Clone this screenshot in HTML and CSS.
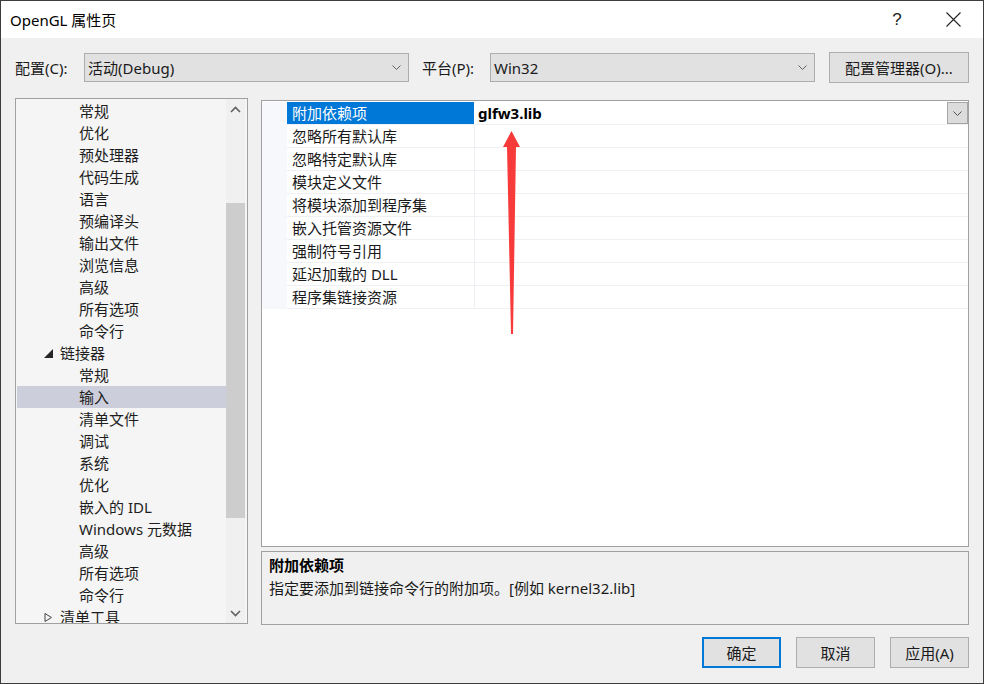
FILE: index.html
```html
<!DOCTYPE html>
<html lang="zh-CN">
<head>
<meta charset="utf-8">
<title>OpenGL 属性页</title>
<link rel="stylesheet" href="styles.css">
</head>
<body>
<div class="window">
  <div class="titlebar">
    <span class="title">OpenGL 属性页</span>
    <span class="help">?</span>
    <svg class="close" width="15" height="15" viewBox="0 0 15 15"><path d="M0.5 0.5 L14.5 14.5 M14.5 0.5 L0.5 14.5" stroke="#222" stroke-width="1.1" fill="none"/></svg>
  </div>
  <div class="body">
    <div class="config-row">
      <span class="label label1">配置(C):</span>
      <div class="select sel1"><span class="sel-text">活动(Debug)</span><svg class="chev" width="9" height="5" viewBox="0 0 9 5"><path d="M0.5 0.5 L4.5 4.5 L8.5 0.5" stroke="#606060" fill="none"/></svg></div>
      <span class="label label2">平台(P):</span>
      <div class="select sel2"><span class="sel-text">Win32</span><svg class="chev" width="9" height="5" viewBox="0 0 9 5"><path d="M0.5 0.5 L4.5 4.5 L8.5 0.5" stroke="#606060" fill="none"/></svg></div>
      <button class="btn mgr">配置管理器(O)...</button>
    </div>
    <div class="main">
      <div class="tree">
        <div class="tree-list">
          <div class="item child">常规</div>
          <div class="item child">优化</div>
          <div class="item child">预处理器</div>
          <div class="item child">代码生成</div>
          <div class="item child">语言</div>
          <div class="item child">预编译头</div>
          <div class="item child">输出文件</div>
          <div class="item child">浏览信息</div>
          <div class="item child">高级</div>
          <div class="item child">所有选项</div>
          <div class="item child">命令行</div>
          <div class="item parent"><svg class="exp" width="9" height="9" viewBox="0 0 9 9"><polygon points="9,0 9,9 0,9" fill="#262626"/></svg>链接器</div>
          <div class="item child">常规</div>
          <div class="item child selected">输入</div>
          <div class="item child">清单文件</div>
          <div class="item child">调试</div>
          <div class="item child">系统</div>
          <div class="item child">优化</div>
          <div class="item child">嵌入的 IDL</div>
          <div class="item child">Windows 元数据</div>
          <div class="item child">高级</div>
          <div class="item child">所有选项</div>
          <div class="item child">命令行</div>
          <div class="item parent"><svg class="exp" width="9" height="9" viewBox="0 0 9 9"><polygon points="1,0.5 7.5,4.5 1,8.5" fill="none" stroke="#444"/></svg>清单工具</div>
        </div>
        <div class="scrollbar">
          <div class="sb-btn"><svg width="11" height="7" viewBox="0 0 11 7"><path d="M1 6 L5.5 1.5 L10 6" stroke="#606060" stroke-width="1.6" fill="none"/></svg></div>
          <div class="sb-track"><div class="sb-thumb"></div></div>
          <div class="sb-btn"><svg width="11" height="7" viewBox="0 0 11 7"><path d="M1 1 L5.5 5.5 L10 1" stroke="#606060" stroke-width="1.6" fill="none"/></svg></div>
        </div>
      </div>
      <div class="right">
        <div class="grid">
          <div class="row">
            <div class="gutter"></div>
            <div class="name active">附加依赖项</div>
            <div class="value"><span class="val-text">glfw3.lib</span><span class="drop"><svg width="9" height="5" viewBox="0 0 9 5"><path d="M0.5 0.5 L4.5 4.5 L8.5 0.5" stroke="#505050" fill="none"/></svg></span></div>
          </div>
          <div class="row"><div class="gutter"></div><div class="name">忽略所有默认库</div><div class="value"></div></div>
          <div class="row"><div class="gutter"></div><div class="name">忽略特定默认库</div><div class="value"></div></div>
          <div class="row"><div class="gutter"></div><div class="name">模块定义文件</div><div class="value"></div></div>
          <div class="row"><div class="gutter"></div><div class="name">将模块添加到程序集</div><div class="value"></div></div>
          <div class="row"><div class="gutter"></div><div class="name">嵌入托管资源文件</div><div class="value"></div></div>
          <div class="row"><div class="gutter"></div><div class="name">强制符号引用</div><div class="value"></div></div>
          <div class="row"><div class="gutter"></div><div class="name">延迟加载的 DLL</div><div class="value"></div></div>
          <div class="row"><div class="gutter"></div><div class="name">程序集链接资源</div><div class="value"></div></div>
        </div>
        <div class="desc">
          <div class="desc-title">附加依赖项</div>
          <div class="desc-text">指定要添加到链接命令行的附加项。[例如 kernel32.lib]</div>
        </div>
      </div>
    </div>
    <div class="buttons">
      <button class="btn action default">确定</button>
      <button class="btn action">取消</button>
      <button class="btn action">应用(A)</button>
    </div>
  </div>
</div>
<svg class="annot" width="984" height="684" viewBox="0 0 984 684">
  <polygon points="511.5,131 520,147 516,147 513,334 511,334 507,147 503,147" fill="#f73b3b"/>
</svg>
</body>
</html>
```

FILE: styles.css
```css
* { box-sizing: border-box; }
html, body { margin: 0; padding: 0; }
body {
  width: 984px;
  height: 684px;
  position: relative;
  overflow: hidden;
  font-family: "Noto Sans", "Noto Sans CJK SC", sans-serif;
  font-size: 15px;
  color: #1a1a1a;
  background: #f0f0f0;
}
.window {
  width: 984px;
  height: 684px;
  border: 1px solid #3c3c3c;
  display: flex;
  flex-direction: column;
  background: #f0f0f0;
}
.titlebar {
  height: 37px;
  flex: none;
  background: #fff;
  display: flex;
  align-items: center;
  padding-left: 9px;
}
.title { flex: 1; line-height: 20px; color: #000; }
.help {
  width: 12px;
  text-align: center;
  font-family: "Liberation Sans", sans-serif;
  font-size: 17px;
  line-height: 20px;
  color: #222;
  margin-right: 43px;
}
.close { margin-right: 22px; display: block; }

.body {
  flex: 1;
  padding: 14px 14px 0 14px;
  display: flex;
  flex-direction: column;
}
.config-row {
  height: 31px;
  display: flex;
  align-items: center;
}
.label { line-height: 20px; color: #1a1a1a; }
.label1 { width: 69px; }
.label2 { width: 68px; margin-left: 13px; }
.select {
  width: 325px;
  height: 29px;
  background: #e1e1e1;
  border: 1px solid #adadad;
  display: flex;
  align-items: center;
  padding: 0 7px 0 3px;
}
.sel-text { flex: 1; line-height: 20px; }
.chev { display: block; }
.btn {
  font-family: "Noto Sans", "Noto Sans CJK SC", sans-serif;
  font-size: 15px;
  color: #1a1a1a;
  background: #e1e1e1;
  border: 1px solid #adadad;
  padding: 0;
  margin: 0;
  line-height: 20px;
}
.mgr { width: 140px; height: 31px; margin-left: 14px; }

.main {
  margin-top: 15px;
  height: 527px;
  display: flex;
  align-items: flex-start;
}
.tree {
  width: 233px;
  height: 526px;
  margin-right: 13px;
  background: #f5f5f5;
  border: 1px solid #a0a0a0;
  display: flex;
  padding: 0 2px 0 1px;
  overflow: hidden;
}
.tree-list {
  flex: 1;
  padding-top: 1px;
  overflow: hidden;
}
.item {
  height: 22px;
  line-height: 22px;
  white-space: nowrap;
  display: flex;
  align-items: center;
  color: #1e1e1e;
}
.item.child { padding-left: 62px; }
.item.parent { padding-left: 27px; }
.exp { display: block; margin-right: 7px; flex: none; }
.item.selected { background: #cccedb; }

.scrollbar {
  width: 19px;
  display: flex;
  flex-direction: column;
  background: #f0f0f0;
}
.sb-btn {
  height: 20px;
  display: flex;
  align-items: center;
  justify-content: center;
  flex: none;
}
.sb-track { flex: 1; }
.sb-thumb {
  margin-top: 84px;
  height: 315px;
  background: #cdcdcd;
}

.right {
  width: 708px;
  margin-top: 2px;
  display: flex;
  flex-direction: column;
}
.grid {
  height: 447px;
  background: #fff;
  border: 1px solid #a0a0a0;
  padding-top: 1px;
}
.row {
  display: flex;
  height: 23px;
}
.gutter {
  width: 25px;
  background: #f6f8fc;
  flex: none;
}
.name {
  width: 188px;
  flex: none;
  padding-left: 5px;
  line-height: 22px;
  border-bottom: 1px solid #eff0f4;
  border-right: 1px solid #eff0f4;
  color: #1a1a1a;
  white-space: nowrap;
}
.name.active {
  background: #0078d7;
  color: #fff;
  border-right-color: #fff;
}
.value {
  flex: 1;
  display: flex;
  align-items: flex-start;
  padding-left: 3px;
  border-bottom: 1px solid #eff0f4;
}
.val-text {
  flex: 1;
  font-weight: bold;
  line-height: 22px;
  color: #000;
}
.drop {
  width: 21px;
  height: 22px;
  background: #dcdcdc;
  border: 1px solid #a5a5a5;
  display: flex;
  align-items: center;
  justify-content: center;
}
.desc {
  margin-top: 4px;
  height: 74px;
  border: 1px solid #a0a0a0;
  background: #f0f0f0;
  padding: 2px 7px;
  line-height: 23px;
}
.desc-title { font-weight: bold; color: #000; }
.desc-text { color: #1a1a1a; white-space: nowrap; }

.buttons {
  margin-top: 12px;
  display: flex;
  justify-content: flex-end;
  gap: 15px;
}
.action { width: 79px; height: 31px; }
.action.default { border: 2px solid #0078d7; }

.annot {
  position: absolute;
  left: 0;
  top: 0;
  pointer-events: none;
}
```
